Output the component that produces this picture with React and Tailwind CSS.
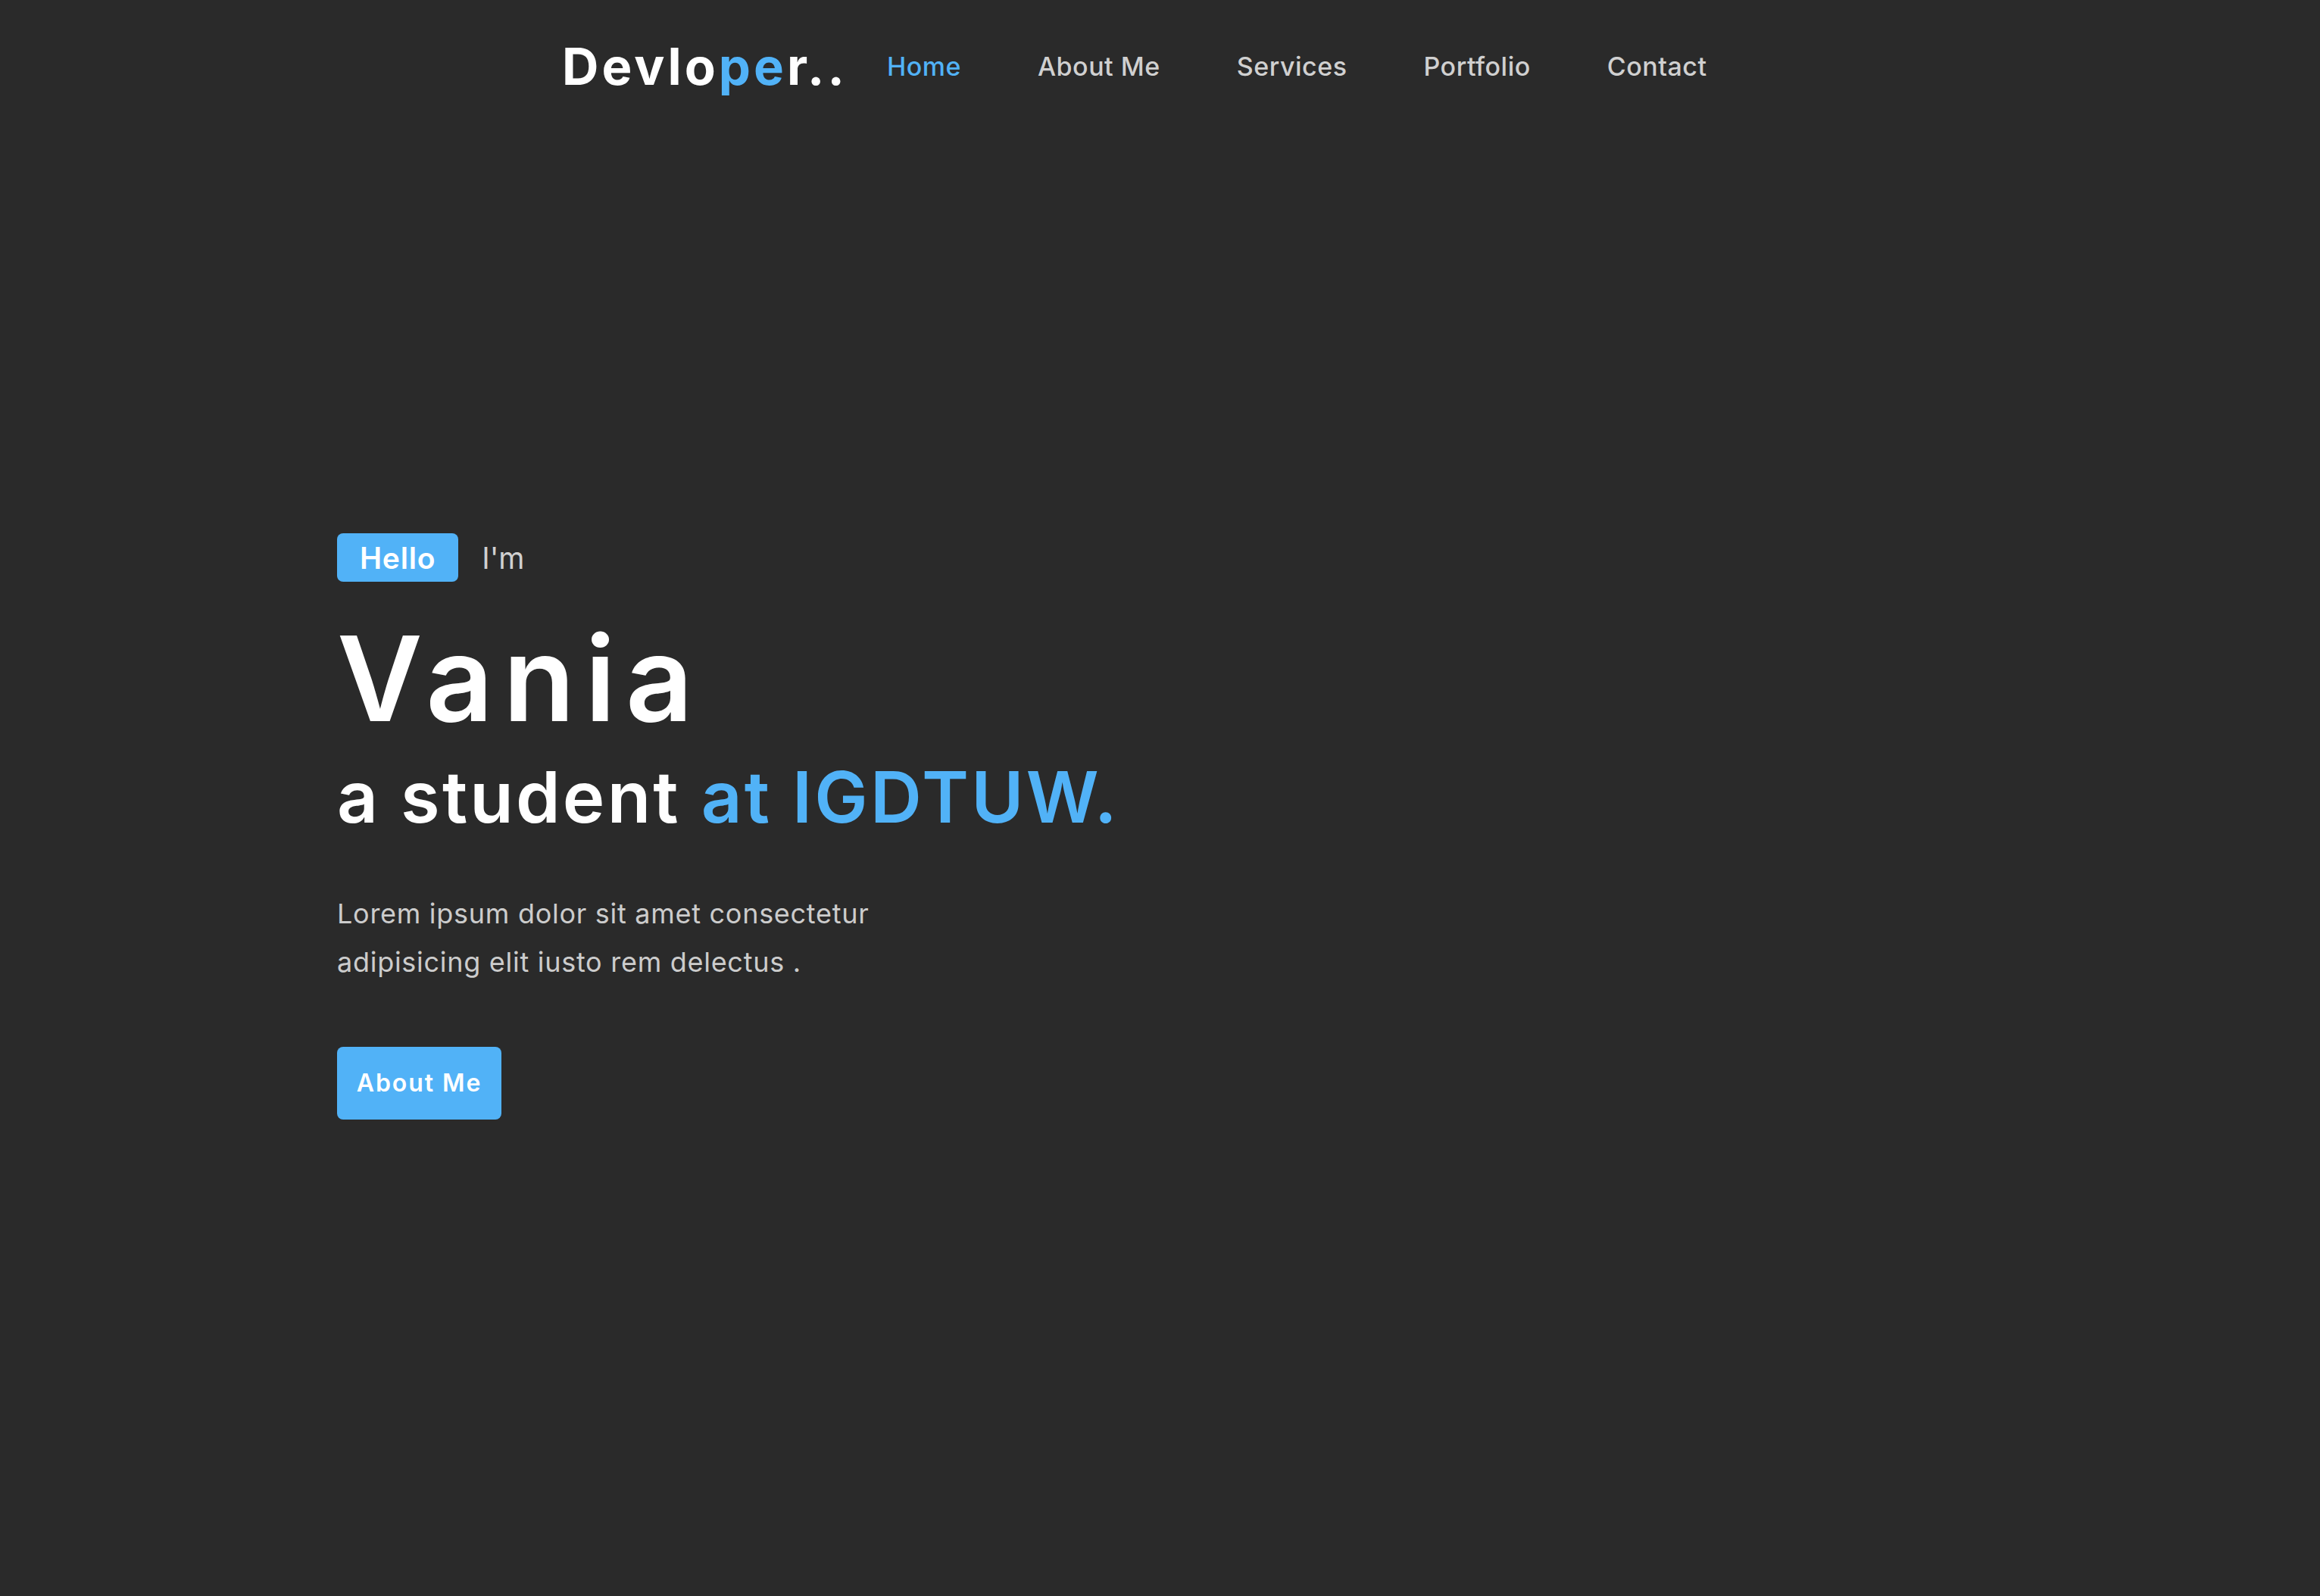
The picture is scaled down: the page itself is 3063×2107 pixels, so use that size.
import React from "react";

const links = ["Home", "About Me", "Services", "Portfolio", "Contact"];

export default function App() {
  return (
    <div className="min-h-screen w-full bg-[#2a2a2a] font-['Inter',sans-serif]">
      {/* ── Header ── */}
      <header className="flex items-center pl-[742px] pt-[54px]">
        <a className="text-[67px] leading-none font-bold text-white tracking-[0.06em]">
          Devlo<span className="text-[#51b2f7]">pe</span>r..
        </a>
        <nav className="flex items-center gap-[101px] ml-[52px]">
          {links.map((l, i) => (
            <a
              key={l}
              className={`text-[34px] leading-none font-medium tracking-[0.015em] ${
                i === 0 ? "text-[#51b2f7]" : "text-[#d0d0d0]"
              }`}
            >
              {l}
            </a>
          ))}
        </nav>
      </header>

      {/* ── Hero ── */}
      <section className="pl-[445px] pt-[583px] pb-[600px]">
        <div className="flex items-center gap-[31px]">
          <span className="inline-flex items-center h-[64px] px-[30px] rounded-[8px] bg-[#51b2f7] text-white text-[39px] font-semibold leading-none tracking-[0.02em]">
            Hello
          </span>
          <span className="text-[39px] leading-none text-[#d0d0d0]">I'm</span>
        </div>

        <h1 className="mt-[50px] text-[155px] leading-none font-semibold text-white tracking-[0.085em]">
          Vania
        </h1>
        <h2 className="mt-[32px] text-[94px] leading-none font-semibold text-white tracking-[0.034em]">
          a student <span className="text-[#51b2f7]">at IGDTUW.</span>
        </h2>

        <p className="mt-[75px] text-[36px] leading-[64px] text-[#cccccc] tracking-[0.02em] w-[760px]">
          Lorem ipsum dolor sit amet consectetur
          <br />
          adipisicing elit iusto rem delectus .
        </p>

        <button className="mt-[80px] h-[96px] w-[217px] rounded-[8px] bg-[#51b2f7] text-white text-[32px] font-semibold tracking-[0.06em] leading-none">
          About Me
        </button>
      </section>
    </div>
  );
}
